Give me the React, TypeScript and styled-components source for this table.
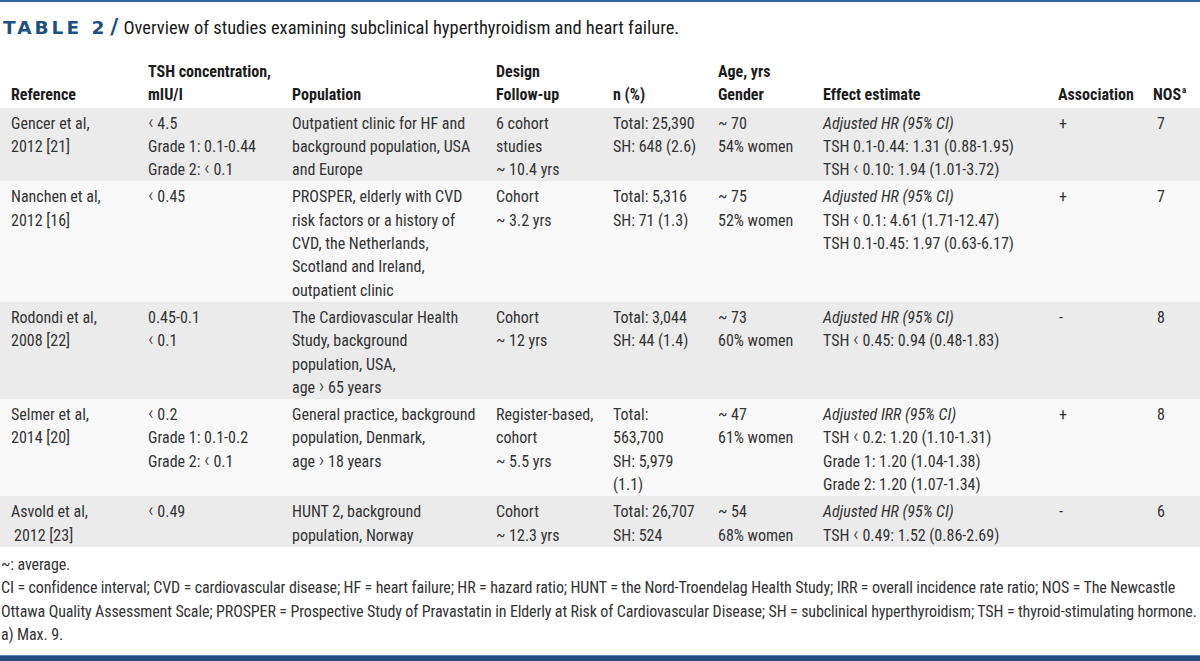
import React from "react";
import styled, { createGlobalStyle } from "styled-components";

const Global = createGlobalStyle`
  html, body { margin: 0; padding: 0; background: #ffffff; }
  body { font-family: "Roboto Condensed", "Liberation Sans", sans-serif; }
`;

const Page = styled.div`
  width: 1200px;
  height: 661px;
  display: flex;
  flex-direction: column;
  overflow: hidden;
  background: #ffffff;
`;

const TopRule = styled.div`
  height: 2px;
  background: #30629a;
`;

const TitleRow = styled.div`
  display: flex;
  align-items: baseline;
  box-sizing: border-box;
  height: 58px;
  padding: 13px 0 0 3px;
  line-height: 24px;
`;

const TableLabel = styled.span`
  font-family: "DejaVu Sans", "Liberation Sans", sans-serif;
  font-weight: 700;
  font-size: 18.5px;
  letter-spacing: 3px;
  color: #1d4f86;
`;

const Slash = styled.span`
  font-family: "DejaVu Sans", "Liberation Sans", sans-serif;
  font-weight: 700;
  font-size: 22px;
  color: #1d4f86;
  margin: 0 5px 0 3px;
`;

const Caption = styled.span`
  font-family: "Roboto Condensed", "Liberation Sans", sans-serif;
  font-size: 18.5px;
  color: #1a1a1a;
`;

const DataTable = styled.table`
  width: 1200px;
  table-layout: fixed;
  border-collapse: collapse;
  border-spacing: 0;
  font-size: 16px;
  line-height: 23.3px;
  color: #333333;
`;

const Col = styled.col<{ $w: number }>`
  width: ${(p) => p.$w}px;
`;

const HeadCell = styled.th<{ $first?: boolean }>`
  text-align: left;
  vertical-align: bottom;
  font-weight: 700;
  color: #1c1c1c;
  padding: 0 0 1px ${(p) => (p.$first ? 11 : 10)}px;
  white-space: nowrap;
`;

const Row = styled.tr<{ $shade: boolean }>`
  background: ${(p) => (p.$shade ? "#ebebeb" : "#f8f8f8")};
`;

const Cell = styled.td<{ $pad?: number }>`
  vertical-align: top;
  padding: 4px 0 0 ${(p) => p.$pad ?? 10}px;
  white-space: nowrap;
`;

const Line = styled.div<{ $italic?: boolean }>`
  font-style: ${(p) => (p.$italic ? "italic" : "normal")};
`;

const Angle = styled.span`
  font-size: 21px;
  line-height: 0;
  font-weight: 300;
`;

const Sup = styled.sup`
  font-size: 9px;
  line-height: 0;
  vertical-align: 7px;
  margin-left: 1px;
`;

const Notes = styled.div`
  padding: 6px 0 0 1px;
  font-size: 16px;
  line-height: 23.3px;
  letter-spacing: -0.12px;
  color: #333333;
  white-space: nowrap;
`;

const Spacer = styled.div`
  flex: 1;
`;

const BottomBar = styled.div`
  height: 5px;
  background: #1f4d80;
  border-top: 1px solid #5a86b4;
`;

type RowData = {
  ref: string[];
  tsh: string[];
  pop: string[];
  design: string[];
  n: string[];
  age: string[];
  effectHead: string;
  effect: string[];
  assoc: string;
  nos: string;
};

const rows: RowData[] = [
  {
    ref: ["Gencer et al,", "2012 [21]"],
    tsh: ["‹ 4.5", "Grade 1: 0.1-0.44", "Grade 2: ‹ 0.1"],
    pop: ["Outpatient clinic for HF and", "background population, USA", "and Europe"],
    design: ["6 cohort", "studies", "~ 10.4 yrs"],
    n: ["Total: 25,390", "SH: 648 (2.6)"],
    age: ["~ 70", "54% women"],
    effectHead: "Adjusted HR (95% CI)",
    effect: ["TSH 0.1-0.44: 1.31 (0.88-1.95)", "TSH ‹ 0.10: 1.94 (1.01-3.72)"],
    assoc: "+",
    nos: "7",
  },
  {
    ref: ["Nanchen et al,", "2012 [16]"],
    tsh: ["‹ 0.45"],
    pop: [
      "PROSPER, elderly with CVD",
      "risk factors or a history of",
      "CVD, the Netherlands,",
      "Scotland and Ireland,",
      "outpatient clinic",
    ],
    design: ["Cohort", "~ 3.2 yrs"],
    n: ["Total: 5,316", "SH: 71 (1.3)"],
    age: ["~ 75", "52% women"],
    effectHead: "Adjusted HR (95% CI)",
    effect: ["TSH ‹ 0.1: 4.61 (1.71-12.47)", "TSH 0.1-0.45: 1.97 (0.63-6.17)"],
    assoc: "+",
    nos: "7",
  },
  {
    ref: ["Rodondi et al,", "2008 [22]"],
    tsh: ["0.45-0.1", "‹ 0.1"],
    pop: ["The Cardiovascular Health", "Study, background", "population, USA,", "age › 65 years"],
    design: ["Cohort", "~ 12 yrs"],
    n: ["Total: 3,044", "SH: 44 (1.4)"],
    age: ["~ 73", "60% women"],
    effectHead: "Adjusted HR (95% CI)",
    effect: ["TSH ‹ 0.45: 0.94 (0.48-1.83)"],
    assoc: "-",
    nos: "8",
  },
  {
    ref: ["Selmer et al,", "2014 [20]"],
    tsh: ["‹ 0.2", "Grade 1: 0.1-0.2", "Grade 2: ‹ 0.1"],
    pop: ["General practice, background", "population, Denmark,", "age › 18 years"],
    design: ["Register-based,", "cohort", "~ 5.5 yrs"],
    n: ["Total:", "563,700", "SH: 5,979", "(1.1)"],
    age: ["~ 47", "61% women"],
    effectHead: "Adjusted IRR (95% CI)",
    effect: ["TSH ‹ 0.2: 1.20 (1.10-1.31)", "Grade 1: 1.20 (1.04-1.38)", "Grade 2: 1.20 (1.07-1.34)"],
    assoc: "+",
    nos: "8",
  },
  {
    ref: ["Asvold et al,", "\u20092012 [23]"],
    tsh: ["‹ 0.49"],
    pop: ["HUNT 2, background", "population, Norway"],
    design: ["Cohort", "~ 12.3 yrs"],
    n: ["Total: 26,707", "SH: 524"],
    age: ["~ 54", "68% women"],
    effectHead: "Adjusted HR (95% CI)",
    effect: ["TSH ‹ 0.49: 1.52 (0.86-2.69)"],
    assoc: "-",
    nos: "6",
  },
];

const widths = [138, 144, 204, 117, 105, 105, 235, 95, 57];

// Renders the ‹ / › comparison marks at the taller size used in the print table.
const Text = ({ value }: { value: string }) => (
  <>
    {value.split(/([‹›])/).map((part, i) =>
      part === "‹" || part === "›" ? <Angle key={i}>{part}</Angle> : <React.Fragment key={i}>{part}</React.Fragment>
    )}
  </>
);

const Lines = ({ items }: { items: string[] }) => (
  <>
    {items.map((t, i) => (
      <Line key={i}>
        <Text value={t} />
      </Line>
    ))}
  </>
);

export default function App() {
  return (
    <Page>
      <Global />
      <TopRule />
      <TitleRow>
        <TableLabel>TABLE 2</TableLabel>
        <Slash>/</Slash>
        <Caption>Overview of studies examining subclinical hyperthyroidism and heart failure.</Caption>
      </TitleRow>
      <DataTable>
        <colgroup>
          {widths.map((w, i) => (
            <Col key={i} $w={w} />
          ))}
        </colgroup>
        <thead>
          <tr>
            <HeadCell $first>Reference</HeadCell>
            <HeadCell>
              <Line>TSH concentration,</Line>
              <Line>mIU/l</Line>
            </HeadCell>
            <HeadCell>Population</HeadCell>
            <HeadCell>
              <Line>Design</Line>
              <Line>Follow-up</Line>
            </HeadCell>
            <HeadCell>n (%)</HeadCell>
            <HeadCell>
              <Line>Age, yrs</Line>
              <Line>Gender</Line>
            </HeadCell>
            <HeadCell>Effect estimate</HeadCell>
            <HeadCell>Association</HeadCell>
            <HeadCell>
              NOS<Sup>a</Sup>
            </HeadCell>
          </tr>
        </thead>
        <tbody>
          {rows.map((r, i) => (
            <Row key={i} $shade={i % 2 === 0}>
              <Cell $pad={11}>
                <Lines items={r.ref} />
              </Cell>
              <Cell>
                <Lines items={r.tsh} />
              </Cell>
              <Cell>
                <Lines items={r.pop} />
              </Cell>
              <Cell>
                <Lines items={r.design} />
              </Cell>
              <Cell>
                <Lines items={r.n} />
              </Cell>
              <Cell>
                <Lines items={r.age} />
              </Cell>
              <Cell>
                <Line $italic>{r.effectHead}</Line>
                <Lines items={r.effect} />
              </Cell>
              <Cell $pad={11}>{r.assoc}</Cell>
              <Cell $pad={14}>{r.nos}</Cell>
            </Row>
          ))}
        </tbody>
      </DataTable>
      <Notes>
        <div>~: average.</div>
        <div>
          CI = confidence interval; CVD = cardiovascular disease; HF = heart failure; HR = hazard ratio; HUNT = the
          Nord-Troendelag Health Study; IRR = overall incidence rate ratio; NOS = The Newcastle
        </div>
        <div>
          Ottawa Quality Assessment Scale; PROSPER = Prospective Study of Pravastatin in Elderly at Risk of
          Cardiovascular Disease; SH = subclinical hyperthyroidism; TSH = thyroid-stimulating hormone.
        </div>
        <div>a) Max. 9.</div>
      </Notes>
      <Spacer />
      <BottomBar />
    </Page>
  );
}
